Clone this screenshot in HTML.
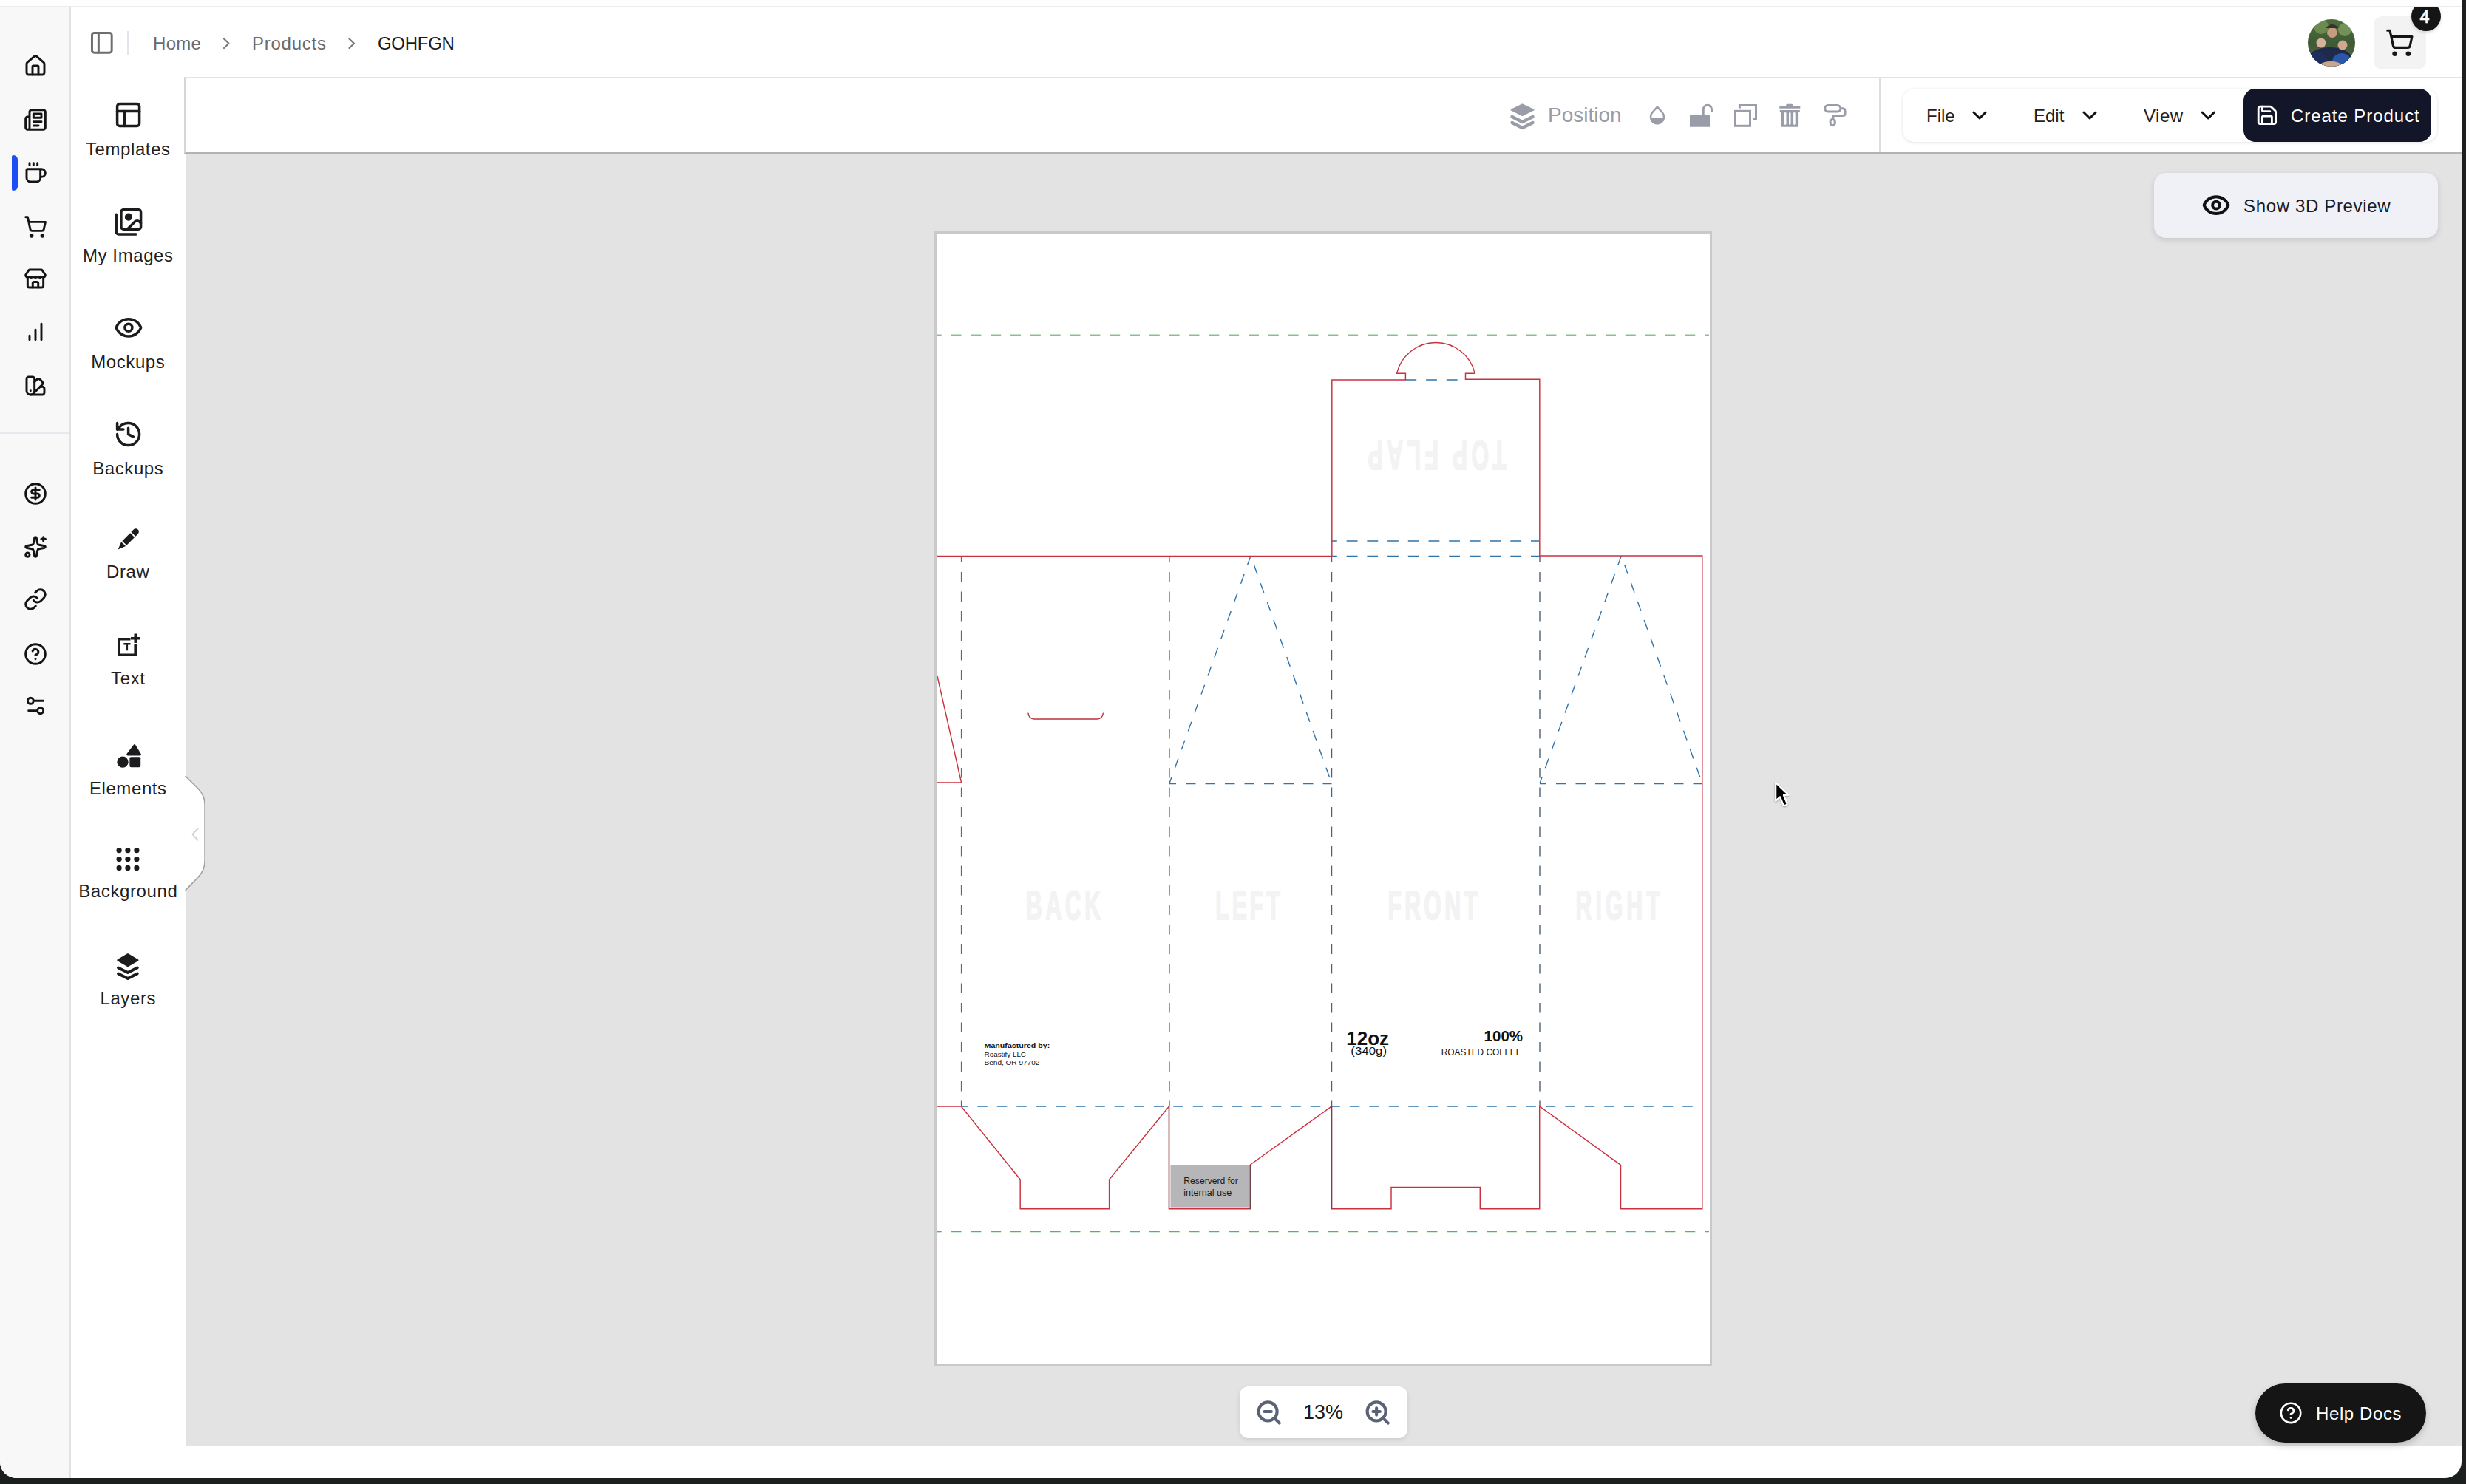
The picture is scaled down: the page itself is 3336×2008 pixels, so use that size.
<!DOCTYPE html>
<html><head><meta charset="utf-8">
<style>
*{margin:0;padding:0;box-sizing:border-box}
html,body{width:3336px;height:2008px;overflow:hidden;background:#1b201f;font-family:"Liberation Sans",sans-serif}
.a{position:absolute}
#app{position:absolute;left:0;top:0;width:3330px;height:2000px;background:#fff;border-radius:0 0 22px 22px;overflow:hidden}
.t{position:absolute;line-height:1;white-space:nowrap}
svg{position:absolute;overflow:visible}
.ic{fill:none;stroke:#1c1c1c;stroke-width:3;stroke-linecap:round;stroke-linejoin:round}
.lbl{position:absolute;left:96px;width:154px;text-align:center;font-size:24px;line-height:1;color:#1f1f1f;letter-spacing:0.6px;text-indent:0.6px}
</style></head><body>
<div id="app">
  <!-- top line -->
  <div class="a" style="left:0;top:8px;width:3330px;height:2px;background:#ececec"></div>
  <!-- left rail -->
  <div class="a" style="left:0;top:10px;width:94px;height:1990px;background:#f8f8f8"></div>
  <div class="a" style="left:94px;top:10px;width:2px;height:1990px;background:#e2e2e2"></div>
  <div class="a" style="left:0;top:585px;width:94px;height:2px;background:#e8e8ee"></div>
  <div class="a" style="left:16px;top:210px;width:8px;height:48px;background:#1d4ef5;border-radius:3px 8px 8px 3px"></div>

  <!-- canvas bg -->
  <div class="a" style="left:251px;top:206px;width:3079px;height:1750px;background:#e3e3e3"></div>
  <!-- toolbar -->
  <div class="a" style="left:249px;top:104px;width:3081px;height:104px;background:#fff;border-top:2px solid #e3e3e3;border-bottom:2px solid #b3b3b3;border-left:2px solid #d6d6d6"></div>
  <div class="a" style="left:2542px;top:105px;width:2px;height:101px;background:#dedede"></div>

  <!-- breadcrumb -->
  <div class="t" style="left:207px;top:47px;font-size:24px;color:#6b6b6b;letter-spacing:0.3px">Home</div>
  <div class="t" style="left:341px;top:47px;font-size:24px;color:#6b6b6b;letter-spacing:0.75px">Products</div>
  <div class="t" style="left:511px;top:47px;font-size:24px;color:#1a1a1a;letter-spacing:-0.3px">GOHFGN</div>
  <div class="a" style="left:172px;top:42px;width:2px;height:32px;background:#e4e4ee"></div>

  <!-- toolbar texts -->
  <div class="t" style="left:2094px;top:142px;font-size:28px;color:#9a9ca6">Position</div>

  <!-- menu -->
  <div class="a" style="left:2574px;top:120px;width:723px;height:72px;background:#fff;border-radius:16px;box-shadow:0 1px 4px rgba(0,0,0,.12)"></div>
  <div class="t" style="left:2606px;top:145px;font-size:24px;color:#1f1f1f">File</div>
  <div class="t" style="left:2751px;top:145px;font-size:24px;color:#1f1f1f">Edit</div>
  <div class="t" style="left:2900px;top:145px;font-size:24px;color:#1f1f1f;letter-spacing:0.5px">View</div>
  <div class="a" style="left:3035px;top:120px;width:254px;height:72px;background:#131628;border-radius:16px"></div>
  <div class="t" style="left:3099px;top:145px;font-size:24px;color:#fff;letter-spacing:0.95px">Create Product</div>

  <!-- labels -->
  <div class="lbl" style="top:190px">Templates</div>
  <div class="lbl" style="top:334px">My Images</div>
  <div class="lbl" style="top:478px">Mockups</div>
  <div class="lbl" style="top:622px">Backups</div>
  <div class="lbl" style="top:762px">Draw</div>
  <div class="lbl" style="top:906px">Text</div>
  <div class="lbl" style="top:1055px">Elements</div>
  <div class="lbl" style="top:1194px">Background</div>
  <div class="lbl" style="top:1339px">Layers</div>

  <!-- artboard -->
  <div class="a" style="left:1264px;top:313px;width:1052px;height:1536px;background:#fff;border:3.5px solid #c9c9c9"></div>


  <!-- dieline -->
  <svg class="a" style="left:0;top:0" width="3336" height="2008" viewBox="0 0 3336 2008">
    <defs><clipPath id="ab"><rect x="1268" y="317" width="1044" height="1528"/></clipPath></defs>
    <g clip-path="url(#ab)">
      <g font-family="Liberation Sans" font-weight="bold" fill="#f3f3f3" stroke="#f3f3f3" stroke-width="2.2" font-size="55">
        <g transform="translate(1388,1244.4) scale(0.55,1)"><text x="0" y="0" textLength="183.6" lengthAdjust="spacing">BACK</text></g>
        <g transform="translate(1644.3,1244.4) scale(0.55,1)"><text x="0" y="0" textLength="159" lengthAdjust="spacing">LEFT</text></g>
        <g transform="translate(1877.5,1244.4) scale(0.55,1)"><text x="0" y="0" textLength="220.5" lengthAdjust="spacing">FRONT</text></g>
        <g transform="translate(2131.6,1244.4) scale(0.55,1)"><text x="0" y="0" textLength="207.3" lengthAdjust="spacing">RIGHT</text></g>
        <g transform="rotate(180 1944 617) translate(1850.5,637) scale(0.55,1)"><text x="0" y="0" textLength="340" lengthAdjust="spacing">TOP FLAP</text></g>
      </g>
      <line x1="1259.7" y1="453.4" x2="2330" y2="453.4" stroke="#88c08c" stroke-width="1.8" stroke-dasharray="14 12.83"/>
      <line x1="1259.7" y1="1666.5" x2="2330" y2="1666.5" stroke="#4fb85d" stroke-width="1.7" stroke-dasharray="14 12.83"/>
      <g fill="none" stroke="#2e74ad" stroke-width="1.4" stroke-dasharray="13.5 13" stroke-dashoffset="4.5">
        <path d="M1300.6 752V1497"/>
        <path d="M1582 752V1497" stroke="#3d79ad"/>
        <path d="M1801.5 752V1497" stroke="#4a6277"/>
        <path d="M2083 752V1497" stroke="#4a6277"/>
        <path d="M1802 752.4H2082.8" stroke-dashoffset="8" stroke-dasharray="14.8 12.9"/>
        <path d="M1802 732H2082" stroke-dashoffset="8" stroke-dasharray="14.8 12.9"/>
        <path d="M1901.4 514H1982.5" stroke-dashoffset="0" stroke-dasharray="14.8 12.9"/>
        <path d="M1582 1060.5H1801.5"/>
        <path d="M2083 1060.5H2302.8"/>
        <path d="M1582 1060L1692 752L1801.5 1060"/>
        <path d="M2083 1060L2193.3 752L2302.8 1060"/>
        <path d="M1300.3 1497H2302.8"/>
      </g>
      <g fill="none" stroke="#c8323f" stroke-width="1.45" stroke-linejoin="miter">
        <path d="M1268 752.4H1801.8V514H1901.4V505.3H1889.5A54.4 54.4 0 0 1 1995.3 505.3H1982.5V513.3H2082.8V752H2302.8V1635.8H2192.5V1576.3L2082.7 1497V1635.8H2002.3V1606.4H1882V1635.8H1801.5V1497L1691.3 1576V1635.8H1581.5V1497L1500.6 1596V1635.8H1380.2V1596.1L1300.3 1497H1268"/>
        <path d="M1268 915L1300.6 1059H1268"/>
        <path d="M1391 964.6A8 8 0 0 0 1399 973H1484.3A8 8 0 0 0 1492.3 964.6" stroke="#b8323e"/>
      </g>
      <path d="M1581.5 1497V1636M1801.5 1497V1636M1691.3 1576V1636" stroke="#4f4a52" stroke-width="1.4" opacity="0.75" fill="none"/>
      <rect x="1583.5" y="1576.4" width="106.5" height="57.2" fill="#b6b6b8"/>
      <g font-family="Liberation Sans" fill="#1a1a1a">
        <text x="1601.3" y="1602" font-size="12" textLength="73.6" lengthAdjust="spacingAndGlyphs">Reserverd for</text>
        <text x="1601.3" y="1617.7" font-size="12" textLength="65" lengthAdjust="spacingAndGlyphs">internal use</text>
      </g>
      <g font-family="Liberation Sans" fill="#111">
        <text x="1331.6" y="1417.8" font-size="9" font-weight="bold" textLength="88.6" lengthAdjust="spacingAndGlyphs">Manufactured by:</text>
        <text x="1331.6" y="1430" font-size="9" textLength="56.4" lengthAdjust="spacingAndGlyphs">Roastify LLC</text>
        <text x="1331.6" y="1440.8" font-size="9" textLength="74.7" lengthAdjust="spacingAndGlyphs">Bend, OR 97702</text>
        <text x="1821.3" y="1413.8" font-size="25.5" font-weight="bold" textLength="57.8" lengthAdjust="spacingAndGlyphs">12oz</text>
        <text x="1827.3" y="1427" font-size="14.5" textLength="48.7" lengthAdjust="spacingAndGlyphs">(340g)</text>
        <text x="2007.6" y="1409" font-size="19.5" font-weight="bold" textLength="52.4" lengthAdjust="spacingAndGlyphs">100%</text>
        <text x="1949.7" y="1427.9" font-size="12.8" textLength="109" lengthAdjust="spacingAndGlyphs">ROASTED COFFEE</text>
      </g>
    </g>
  </svg>

  <!-- show 3d -->
  <div class="a" style="left:2914px;top:234px;width:384px;height:88px;background:#eff1f6;border-radius:16px;box-shadow:0 3px 8px rgba(0,0,0,.12)"></div>
  <div class="t" style="left:3035px;top:267px;font-size:24px;color:#151a2c;letter-spacing:0.65px">Show 3D Preview</div>

  <!-- zoom -->
  <div class="a" style="left:1677px;top:1876px;width:227px;height:70px;background:#fff;border-radius:12px;box-shadow:0 2px 6px rgba(0,0,0,.1)"></div>
  <div class="t" style="left:1763px;top:1897.5px;font-size:27px;color:#1a1a1a">13%</div>

  <!-- help docs -->
  <div class="a" style="left:3051px;top:1872px;width:231px;height:80px;background:#151515;border-radius:40px;box-shadow:0 4px 10px rgba(0,0,0,.18)"></div>
  <div class="t" style="left:3133px;top:1901px;font-size:24px;color:#fff;letter-spacing:0.6px">Help Docs</div>

  <!-- avatar / cart -->
  
  <div class="a" style="left:3211px;top:22px;width:71px;height:72px;border-radius:12px;background:#f3f3f4"></div>
  <div class="a" style="left:3250px;top:10px;width:70px;height:50px;overflow:hidden"><div class="a" style="left:12px;top:-8px;width:40px;height:40px;border-radius:20px;background:#151515;box-shadow:0 2px 4px rgba(0,0,0,.15)"></div></div>
  <div class="t" style="left:3260px;width:40px;text-align:center;top:11.5px;font-size:23.5px;color:#fff;-webkit-text-stroke:0.7px #fff">4</div>
<svg class="a" style="left:0;top:0;z-index:5" width="3336" height="2008" viewBox="0 0 3336 2008">
<g transform="translate(32,73) scale(1.333)" fill="none" stroke="#141414" stroke-width="2.2" stroke-linecap="round" stroke-linejoin="round" ><path d="M15 21v-8a1 1 0 0 0-1-1h-4a1 1 0 0 0-1 1v8"/><path d="M3 10a2 2 0 0 1 .709-1.528l7-5.999a2 2 0 0 1 2.582 0l7 5.999A2 2 0 0 1 21 10v9a2 2 0 0 1-2 2H5a2 2 0 0 1-2-2z"/></g>
<g transform="translate(32,146) scale(1.333)" fill="none" stroke="#141414" stroke-width="2.2" stroke-linecap="round" stroke-linejoin="round" ><path d="M4 22h16a2 2 0 0 0 2-2V4a2 2 0 0 0-2-2H8a2 2 0 0 0-2 2v16a2 2 0 0 1-2 2Zm0 0a2 2 0 0 1-2-2v-9c0-1.1.9-2 2-2h2"/><path d="M18 14h-8"/><path d="M15 18h-5"/><path d="M10 6h8v4h-8V6Z"/></g>
<g transform="translate(32,218) scale(1.333)" fill="none" stroke="#141414" stroke-width="2.2" stroke-linecap="round" stroke-linejoin="round" ><path d="M10 2v2"/><path d="M14 2v2"/><path d="M16 8a1 1 0 0 1 1 1v8a4 4 0 0 1-4 4H7a4 4 0 0 1-4-4V9a1 1 0 0 1 1-1h14a4 4 0 1 1 0 8h-1"/><path d="M6 2v2"/></g>
<g transform="translate(32,291) scale(1.333)" fill="none" stroke="#141414" stroke-width="2.2" stroke-linecap="round" stroke-linejoin="round" ><circle cx="8" cy="21" r="1"/><circle cx="19" cy="21" r="1"/><path d="M2.05 2.05h2l2.66 12.42a2 2 0 0 0 2 1.58h9.78a2 2 0 0 0 1.95-1.57l1.65-7.43H5.12"/></g>
<g transform="translate(32,362) scale(1.333)" fill="none" stroke="#141414" stroke-width="2.2" stroke-linecap="round" stroke-linejoin="round" ><path d="M6.4 2.3 H17.6 Q18.4 2.3 19 3 L22 7.6 Q22.3 8.3 21.5 9.2 Q20.5 10.3 19.3 9.7 Q18.3 9.2 17.6 9.8 Q16.5 10.6 15.2 9.8 Q14.1 9.2 13.2 9.8 Q12 10.6 10.8 9.8 Q9.9 9.2 8.8 9.8 Q7.6 10.6 6.4 9.8 Q5.6 9.2 4.7 9.7 Q3.5 10.3 2.5 9.2 Q1.7 8.3 2 7.6 L5 3 Q5.6 2.3 6.4 2.3 Z"/><path d="M4 10.5 V18.5 Q4 20.3 5.8 20.3 H18.2 Q20 20.3 20 18.5 V10.5"/><path d="M9.2 20.3 V16 Q9.2 14.6 10.6 14.6 H13.4 Q14.8 14.6 14.8 16 V20.3"/></g>
<g transform="translate(32,433) scale(1.333)" fill="none" stroke="#141414" stroke-width="2.2" stroke-linecap="round" stroke-linejoin="round" ><path d="M12 20V10"/><path d="M18 20V4"/><path d="M6 20v-4"/></g>
<g transform="translate(32,506) scale(1.333)" fill="none" stroke="#141414" stroke-width="2.2" stroke-linecap="round" stroke-linejoin="round" ><path d="M11 17a4 4 0 0 1-8 0V5a2 2 0 0 1 2-2h4a2 2 0 0 1 2 2Z"/><path d="M16.7 13H19a2 2 0 0 1 2 2v4a2 2 0 0 1-2 2H7"/><path d="M7 17h.01"/><path d="m11 8 2.3-2.3a2.4 2.4 0 0 1 3.404.004L18.6 7.6a2.4 2.4 0 0 1 .026 3.434L9.9 19.8"/></g>
<g transform="translate(32,652) scale(1.333)" fill="none" stroke="#141414" stroke-width="2.2" stroke-linecap="round" stroke-linejoin="round" ><circle cx="12" cy="12" r="10"/><path d="M16 8h-6a2 2 0 1 0 0 4h4a2 2 0 1 1 0 4H8"/><path d="M12 18V6"/></g>
<g transform="translate(32,724) scale(1.333)" fill="none" stroke="#141414" stroke-width="2.2" stroke-linecap="round" stroke-linejoin="round" ><path d="M11.017 2.814a1 1 0 0 1 1.966 0l1.051 5.558a2 2 0 0 0 1.594 1.594l5.558 1.051a1 1 0 0 1 0 1.966l-5.558 1.051a2 2 0 0 0-1.594 1.594l-1.051 5.558a1 1 0 0 1-1.966 0l-1.051-5.558a2 2 0 0 0-1.594-1.594l-5.558-1.051a1 1 0 0 1 0-1.966l5.558-1.051a2 2 0 0 0 1.594-1.594z"/><path d="M20 2v4"/><path d="M22 4h-4"/><circle cx="4" cy="20" r="2"/></g>
<g transform="translate(32,795) scale(1.333)" fill="none" stroke="#141414" stroke-width="2.2" stroke-linecap="round" stroke-linejoin="round" ><path d="M10 13a5 5 0 0 0 7.54.54l3-3a5 5 0 0 0-7.07-7.07l-1.72 1.71"/><path d="M14 11a5 5 0 0 0-7.54-.54l-3 3a5 5 0 0 0 7.07 7.07l1.71-1.71"/></g>
<g transform="translate(32,869) scale(1.333)" fill="none" stroke="#141414" stroke-width="2.2" stroke-linecap="round" stroke-linejoin="round" ><circle cx="12" cy="12" r="10"/><path d="M9.09 9a3 3 0 0 1 5.83 1c0 2-3 3-3 3"/><path d="M12 17h.01"/></g>
<g transform="translate(32,939) scale(1.333)" fill="none" stroke="#141414" stroke-width="2.2" stroke-linecap="round" stroke-linejoin="round" ><path d="M20 7h-9"/><path d="M14 17H5"/><circle cx="17" cy="17" r="3"/><circle cx="7" cy="7" r="3"/></g>
<g transform="translate(153.6,135.6) scale(1.667)" fill="none" stroke="#1c1c1e" stroke-width="2.1" stroke-linecap="round" stroke-linejoin="round" ><rect width="18" height="18" x="3" y="3" rx="2"/><path d="M3 9h18"/><path d="M9 21V9"/></g>
<g transform="translate(153.9,280.3) scale(1.667)" fill="none" stroke="#1c1c1e" stroke-width="2.1" stroke-linecap="round" stroke-linejoin="round" ><path d="M18 22H4a2 2 0 0 1-2-2V6"/><path d="m22 13-1.296-1.296a2.41 2.41 0 0 0-3.408 0L11 18"/><circle cx="12" cy="8" r="2" fill="#1c1c1e"/><rect width="16" height="16" x="6" y="2" rx="2"/></g>
<g transform="translate(153.9,423.3) scale(1.667)" fill="none" stroke="#1c1c1e" stroke-width="2.1" stroke-linecap="round" stroke-linejoin="round" ><path d="M2.062 12.348a1 1 0 0 1 0-.696 10.75 10.75 0 0 1 19.876 0 1 1 0 0 1 0 .696 10.75 10.75 0 0 1-19.876 0"/><circle cx="12" cy="12" r="3"/></g>
<g transform="translate(153.6,567.6) scale(1.667)" fill="none" stroke="#1c1c1e" stroke-width="2.1" stroke-linecap="round" stroke-linejoin="round" ><path d="M3 12a9 9 0 1 0 9-9 9.75 9.75 0 0 0-6.74 2.74L3 8"/><path d="M3 3v5h5"/><path d="M12 7v5l4 2"/></g>
<g fill="#1c1c1e" stroke="none">
<path d="M159.6 743.6 L164.1 733.16 L170.04 739.1 Z"/>
<path d="M165.37 731.89 L176.12 721.13 L182.06 727.07 L171.31 737.83 Z"/>
<path d="M177.39 719.87 L180.72 716.54 A4.2 4.2 0 0 1 186.66 722.48 L183.33 725.81 Z"/>
</g>
<g fill="none" stroke="#1c1c1e" stroke-width="3.6">
<path d="M176.5 864.8 H161.2 V886.2 H183.2 V871.5"/>
<path d="M183.3 857.5 V870 M177 863.7 H189.6"/>
</g>
<path d="M167.3 871.2 H176.5 M171.9 871.2 V880.3" stroke="#1c1c1e" stroke-width="2.4" fill="none"/>
<g fill="#1c1c1e">
<path d="M181 1007.6 Q182 1006.6 183 1007.6 L190.8 1020.2 Q191.4 1022.4 189.2 1022.4 H172.9 Q170.6 1022.4 171.3 1020.2 Z"/>
<circle cx="166" cy="1031.2" r="7.6"/>
<rect x="175.4" y="1024.3" width="14.8" height="14" rx="2"/>
<circle cx="161.1" cy="1150.7" r="3.6"/><circle cx="172.9" cy="1150.7" r="3.6"/><circle cx="184.9" cy="1150.7" r="3.6"/>
<circle cx="161.1" cy="1162.6" r="3.6"/><circle cx="172.9" cy="1162.6" r="3.6"/><circle cx="184.9" cy="1162.6" r="3.6"/>
<circle cx="161.1" cy="1174.4" r="3.6"/><circle cx="172.9" cy="1174.4" r="3.6"/><circle cx="184.9" cy="1174.4" r="3.6"/>
<path d="M159.5 1299.2 L172.9 1291.4 L186.3 1299.2 L172.9 1307 Z" stroke="#1c1c1e" stroke-width="2.4" stroke-linejoin="round"/>
</g>
<path d="M160 1309.5 L172.9 1316 L185.8 1309.5 M160 1317.5 L172.9 1324 L185.8 1317.5" fill="none" stroke="#1c1c1e" stroke-width="4" stroke-linecap="round" stroke-linejoin="round"/>
<g fill="#9a9ca8">
<path d="M2044.5 148.7 L2059.4 141.4 L2074.5 148.7 L2059.4 156 Z" stroke="#9a9ca8" stroke-width="2" stroke-linejoin="round"/>
</g>
<path d="M2045.5 158 L2059.4 165 L2073.5 158 M2045.5 166 L2059.4 173 L2073.5 166" fill="none" stroke="#9a9ca8" stroke-width="4.4" stroke-linecap="round" stroke-linejoin="round"/>
<path d="M2242 144.5 L2235 152.5 A9 9 0 1 0 2249 152.5 Z" fill="none" stroke="#9a9ca8" stroke-width="2.6" stroke-linejoin="round"/>
<path d="M2232.8 159.2 H2251.2 A9.2 9.2 0 0 1 2232.8 159.2 Z" fill="#9a9ca8"/>
<path d="M2286 155 H2311 Q2313 155 2313 157 V171.8 H2286 Z" fill="#9a9ca8"/>
<path d="M2304.2 155 V148 A5.7 5.7 0 0 1 2315.6 148 V150.5" fill="none" stroke="#9a9ca8" stroke-width="3" stroke-linecap="round"/>
<rect x="2347.5" y="150.3" width="20" height="20" fill="none" stroke="#9a9ca8" stroke-width="3"/>
<path d="M2353.4 146.5 V142.5 H2375.5 V161.2 H2371.5" fill="none" stroke="#9a9ca8" stroke-width="3"/>
<path d="M2407.3 143 H2435.3 V146.8 H2407.3 Z M2416 143 Q2416 140.8 2418 140.8 H2423.7 Q2425.7 140.8 2425.7 143 Z" fill="#9a9ca8"/>
<path d="M2407.8 149.1 H2434.8 V151 H2433.1 V171.8 H2409.3 V151 H2407.8 Z" fill="#9a9ca8"/>
<path d="M2415.2 153.4 V167.6 M2421.3 153.4 V167.6 M2427.4 153.4 V167.6" stroke="#fff" stroke-width="2.6" stroke-linecap="round"/>
<rect x="2468.7" y="142.5" width="21.2" height="8.4" rx="4.2" fill="none" stroke="#9a9ca8" stroke-width="3"/>
<path d="M2490.5 146.7 H2492.5 Q2496 146.7 2496 150.2 V153.5 Q2496 156.6 2492.9 156.6 H2482.4 Q2479.3 156.6 2479.3 159.7 V161" fill="none" stroke="#9a9ca8" stroke-width="3"/>
<rect x="2476.1" y="161.4" width="6.2" height="8.3" rx="3.1" fill="none" stroke="#9a9ca8" stroke-width="3"/>
<g transform="translate(120,40) scale(1.485)" fill="none" stroke="#6e6e6e" stroke-width="2" stroke-linecap="round" stroke-linejoin="round" ><rect width="18" height="18" x="3" y="3" rx="2"/><path d="M9 3v18"/></g>
<path d="M303 52.5 L309.5 58.7 L303 65" fill="none" stroke="#777" stroke-width="2.2" stroke-linecap="round" stroke-linejoin="round"/>
<path d="M472.5 52.5 L479 58.7 L472.5 65" fill="none" stroke="#777" stroke-width="2.2" stroke-linecap="round" stroke-linejoin="round"/>
<path d="M2669.9 152 L2678 160 L2686.1 152" fill="none" stroke="#111" stroke-width="3" stroke-linecap="round" stroke-linejoin="round"/>
<path d="M2818.9 152 L2827 160 L2835.1 152" fill="none" stroke="#111" stroke-width="3" stroke-linecap="round" stroke-linejoin="round"/>
<path d="M2979.2000000000003 152 L2987.3 160 L2995.4 152" fill="none" stroke="#111" stroke-width="3" stroke-linecap="round" stroke-linejoin="round"/>
<g transform="translate(3051.3,140.2) scale(1.3)" fill="none" stroke="#fff" stroke-width="2.2" stroke-linecap="round" stroke-linejoin="round" ><path d="M15.2 3a2 2 0 0 1 1.4.6l3.8 3.8a2 2 0 0 1 .6 1.4V19a2 2 0 0 1-2 2H5a2 2 0 0 1-2-2V5a2 2 0 0 1 2-2z"/><path d="M17 21v-7a1 1 0 0 0-1-1H8a1 1 0 0 0-1 1v7"/><path d="M7 3v4a1 1 0 0 0 1 1h7"/></g>
<g transform="translate(3226.3,37.8) scale(1.66)" fill="none" stroke="#151515" stroke-width="1.9" stroke-linecap="round" stroke-linejoin="round" ><circle cx="8" cy="21" r="1"/><circle cx="19" cy="21" r="1"/><path d="M2.05 2.05h2l2.66 12.42a2 2 0 0 0 2 1.58h9.78a2 2 0 0 0 1.95-1.57l1.65-7.43H5.12"/></g>
<g transform="translate(1697.9,1892.7) scale(1.565)" fill="none" stroke="#5b6275" stroke-width="2.6" stroke-linecap="round" stroke-linejoin="round" ><circle cx="11" cy="11" r="8"/><line x1="21" x2="16.65" y1="21" y2="16.65"/><line x1="8" x2="14" y1="11" y2="11"/></g>
<g transform="translate(1844.9,1892.7) scale(1.565)" fill="none" stroke="#5b6275" stroke-width="2.6" stroke-linecap="round" stroke-linejoin="round" ><circle cx="11" cy="11" r="8"/><line x1="21" x2="16.65" y1="21" y2="16.65"/><line x1="11" x2="11" y1="8" y2="14"/><line x1="8" x2="14" y1="11" y2="11"/></g>
<g transform="translate(3083.2,1896.1) scale(1.32)" fill="none" stroke="#fff" stroke-width="2" stroke-linecap="round" stroke-linejoin="round" ><circle cx="12" cy="12" r="10"/><path d="M9.09 9a3 3 0 0 1 5.83 1c0 2-3 3-3 3"/><path d="M12 17h.01"/></g>
<g transform="translate(2978.4,258) scale(1.636)" fill="none" stroke="#111" stroke-width="2.4" stroke-linecap="round" stroke-linejoin="round" ><path d="M2.062 12.348a1 1 0 0 1 0-.696 10.75 10.75 0 0 1 19.876 0 1 1 0 0 1 0 .696 10.75 10.75 0 0 1-19.876 0"/><circle cx="12" cy="12" r="3"/></g>
</svg>
<svg class="a" style="left:0;top:0;z-index:6" width="3336" height="2008" viewBox="0 0 3336 2008">
<path d="M250 1049.5 L267.5 1066.5 Q277.1 1076 277.1 1089 V1165 Q277.1 1178 267.5 1187.5 L250 1205.5 Z" fill="#fff"/>
<path d="M250.6 1050 L267.5 1066.5 Q277.1 1076 277.1 1089 V1165 Q277.1 1178 267.5 1187.5 L250.6 1205" fill="none" stroke="#9f9f9f" stroke-width="1.6"/>
<path d="M267.7 1121.4 L260.3 1129 L267.7 1136.7" fill="none" stroke="#c9c9cc" stroke-width="1.6" stroke-linecap="round" stroke-linejoin="round"/>
<defs><filter id="cs" x="-50%" y="-50%" width="200%" height="200%"><feDropShadow dx="0" dy="1" stdDeviation="1.2" flood-opacity="0.35"/></filter>
<clipPath id="avc"><circle cx="3154" cy="58" r="32"/></clipPath>
<linearGradient id="avg" x1="0" y1="0" x2="0" y2="1"><stop offset="0" stop-color="#4f6e3d"/><stop offset="0.5" stop-color="#3f5a35"/><stop offset="1" stop-color="#5c6a52"/></linearGradient>
</defs>
<path d="M2402.2 1059 L2402.2 1083.5 L2408 1078.3 L2412.3 1088.6 Q2413.3 1090.6 2415.3 1089.7 L2416.3 1089.2 Q2418 1088.2 2417.2 1086.2 L2412.9 1076 L2419.6 1075.6 Z" fill="#000" stroke="#fff" stroke-width="2.2" stroke-linejoin="round" filter="url(#cs)"/>
<g clip-path="url(#avc)">
<rect x="3120" y="24" width="70" height="70" fill="url(#avg)"/>
<circle cx="3140" cy="36" r="10" fill="#7a9a58" opacity=".7"/>
<circle cx="3172" cy="40" r="9" fill="#8fb070" opacity=".6"/>
<ellipse cx="3152" cy="80" rx="30" ry="16" fill="#1f2a4a"/>
<ellipse cx="3136" cy="82" rx="12" ry="12" fill="#1e2d5a"/>
<ellipse cx="3168" cy="84" rx="13" ry="12" fill="#2a57a8"/>
<circle cx="3155" cy="44" r="7" fill="#c89a80"/>
<path d="M3146 38 Q3155 28 3164 38 Z" fill="#333"/>
<circle cx="3140" cy="58" r="6.5" fill="#d6b29a"/>
<circle cx="3169" cy="61" r="6.5" fill="#cfa88e"/>
<ellipse cx="3153" cy="88" rx="14" ry="5" fill="#c9a58c"/>
</g>
</svg>
</div>
</body></html>
